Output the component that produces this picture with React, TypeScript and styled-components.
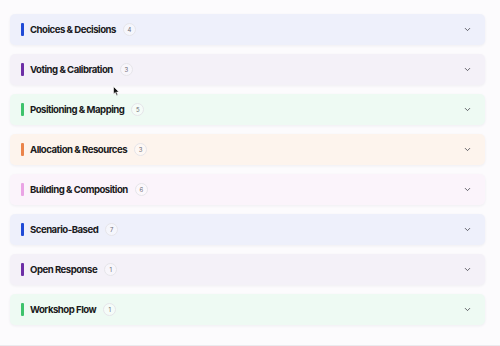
import styled, { createGlobalStyle } from 'styled-components';
import { ChevronDown } from 'lucide-react';

const GlobalStyle = createGlobalStyle`
  html, body {
    margin: 0;
    padding: 0;
    background: #fcfbfd;
  }
  * { box-sizing: border-box; }
`;

const Page = styled.div`
  position: relative;
  min-height: 346px;
  padding: 14px 15px 0 10px;
  border-bottom: 1px solid #ebeaee;
  font-family: Inter, "Liberation Sans", sans-serif;
`;

const List = styled.div`
  display: flex;
  flex-direction: column;
  gap: 9px;
`;

const Card = styled.div<{ $bg: string }>`
  height: 31px;
  display: flex;
  align-items: center;
  padding: 0 13px 1px 11px;
  background: ${p => p.$bg};
  border-radius: 5px;
  box-shadow: 0 1px 3px rgba(40, 30, 70, 0.06);
`;

const Bar = styled.span<{ $color: string }>`
  width: 3px;
  height: 13px;
  border-radius: 1px;
  background: ${p => p.$color};
  margin-right: 6px;
`;

const Title = styled.span`
  font-size: 9.6px;
  font-weight: 700;
  color: #1a1a20;
  letter-spacing: -0.5px;
`;

const Badge = styled.span`
  margin-left: 7px;
  width: 13px;
  height: 13px;
  border-radius: 50%;
  border: 1px solid #e6e5ea;
  background: rgba(255, 255, 255, 0.4);
  display: flex;
  align-items: center;
  justify-content: center;
  font-size: 6px;
  color: #6b6b75;
`;

const Chevron = styled(ChevronDown)`
  margin-left: auto;
  width: 9px;
  height: 9px;
  color: #47464f;
`;

const Cursor = styled.svg`
  position: absolute;
  left: 113px;
  top: 86px;
  width: 7px;
  height: 10px;
`;

const sections = [
  { title: 'Choices & Decisions', count: 4, bar: '#1f4ad6', bg: '#eef0fb' },
  { title: 'Voting & Calibration', count: 3, bar: '#6d2fa6', bg: '#f4f1f8' },
  { title: 'Positioning & Mapping', count: 5, bar: '#3ec36c', bg: '#eefaf3' },
  { title: 'Allocation & Resources', count: 3, bar: '#ea844b', bg: '#fdf4ed' },
  { title: 'Building & Composition', count: 6, bar: '#eaa4e5', bg: '#fbf4fb' },
  { title: 'Scenario-Based', count: 7, bar: '#1f4ad6', bg: '#eef0fb' },
  { title: 'Open Response', count: 1, bar: '#6d2fa6', bg: '#f4f1f8' },
  { title: 'Workshop Flow', count: 1, bar: '#3ec36c', bg: '#eefaf3' },
];

export default function App() {
  return (
    <Page>
      <GlobalStyle />
      <List>
        {sections.map(s => (
          <Card key={s.title} $bg={s.bg}>
            <Bar $color={s.bar} />
            <Title>{s.title}</Title>
            <Badge>{s.count}</Badge>
            <Chevron strokeWidth={2.2} />
          </Card>
        ))}
      </List>
      <Cursor viewBox="0 0 7 10">
        <path d="M0.5 0.5 L0.5 8 L2.3 6.4 L3.6 9.4 L4.8 8.9 L3.6 6 L6 6 Z" fill="#111" stroke="#fff" strokeWidth="0.6" />
      </Cursor>
    </Page>
  );
}
